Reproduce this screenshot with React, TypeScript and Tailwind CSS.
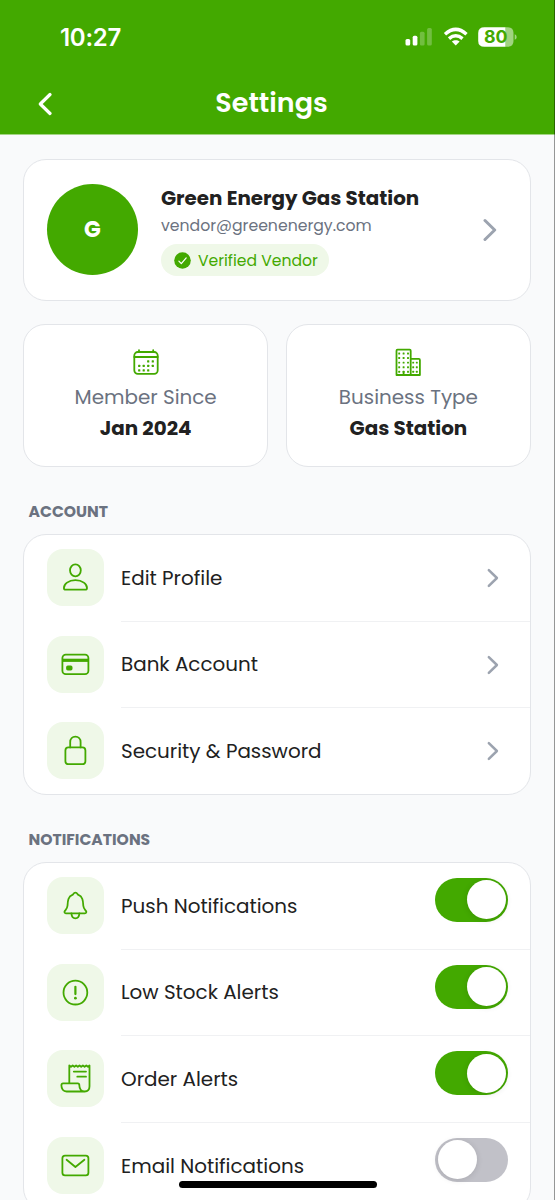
import { useState } from 'react';
import type { ReactNode } from 'react';

const PersonIcon = () => (
  <>
    <ellipse cx="28.4" cy="21.3" rx="5.4" ry="6" />
    <path d="M16.9 38.9c0-3.6 4.4-7.8 11.5-7.8s11.6 4.2 11.6 7.8c0 1.2-.7 1.8-1.9 1.8h-19.3c-1.2 0-1.9-.6-1.9-1.800z" />
  </>
);

const CardIcon = () => (
  <>
    <rect x="15.4" y="18.6" width="26" height="19.6" rx="3.4" />
    <path d="M15.4 24.3h26" strokeWidth="3.2" strokeLinecap="butt" />
    <rect x="20" y="30.5" width="4.6" height="3" rx="0.8" fill="currentColor" />
  </>
);

const LockIcon = () => (
  <>
    <rect x="18.4" y="25.4" width="20" height="16.8" rx="3" />
    <path d="M23.2 25.4v-5.2c0-3.4 2.2-5.5 5.2-5.5s5.200 2.100 5.200 5.500v5.200" />
  </>
);

const BellIcon = () => (
  <>
    <path d="M18.9 36.3c-1.4 0-1.9-1.3-1-2.4 1.3-1.6 2.4-2.6 2.6-5.1.3-4.7.4-9.3 4.9-10.9.8-.3 1-2.2 3-2.2s2.2 1.9 3 2.2c4.5 1.6 4.6 6.2 4.9 10.9.2 2.5 1.3 3.5 2.6 5.1.9 1.1.4 2.4-1 2.4z" />
    <path d="M24.4 36.3c.2 3.1 1.8 5.100 4 5.100s3.800-2 4-5.100" />
  </>
);

const AlertIcon = () => (
  <>
    <circle cx="28.4" cy="28.6" r="11.9" />
    <path d="M28.4 22.8v7.3" strokeWidth="2.2" />
    <circle cx="28.4" cy="34.2" r="1.4" fill="currentColor" stroke="none" />
  </>
);

const ScrollIcon = () => (
  <>
    <path d="M22.3 33.3V15.5l1.7 1.3 1.7-1.3 1.7 1.3 1.7-1.3 1.7 1.3 1.7-1.3 1.7 1.3 1.7-1.3 1.7 1.3 1.7-1.3 1.7 1.3 1.5-1.3v20.8c0 3.4-1.9 5.2-4.8 5.2H19.6c-3.4 0-5.2-2.6-5.2-6.2 0-1.4.5-2 1.7-2h14.7c1.2 0 1.5.6 1.5 1.8 0 3.4 2 6.4 5.4 6.4" />
    <path d="M26.8 21.6h12.2M30.3 26.7h8.7" />
  </>
);

const MailIcon = () => (
  <>
    <rect x="15.4" y="18.7" width="26" height="19.6" rx="2.6" />
    <path d="M19.6 22.8l8.8 7.2 9-7.2" />
  </>
);

function Chevron({ className, width }: { className: string; width: number }) {
  return (
    <svg viewBox="0 0 14 24" className={className} fill="none" stroke="currentColor" strokeWidth={width} strokeLinecap="round" strokeLinejoin="round">
      <path d="M2 2.5L11.7 12 2 21.5" />
    </svg>
  );
}

function Toggle({ on, onChange }: { on: boolean; onChange: () => void }) {
  return (
    <button
      role="switch"
      aria-checked={on}
      onClick={onChange}
      className={`mb-3 flex h-11 w-[73px] items-center rounded-full px-[2.5px] ${on ? 'justify-end bg-[#43a900]' : 'justify-start bg-[#c1c1c8]'}`}
    >
      <span className="size-[39px] rounded-full bg-white shadow-[0_1px_6px_rgba(0,0,0,0.12)]" />
    </button>
  );
}

function Row({ icon, label, last, children }: { icon: ReactNode; label: string; last?: boolean; children: ReactNode }) {
  return (
    <div className="flex h-[86.7px] pl-[23px]">
      <div className="mt-3.5 size-[57px] shrink-0 rounded-2xl bg-[#eff8e8]">
        <svg viewBox="0 0 57 57" className="size-full text-[#43a900]" fill="none" stroke="currentColor" strokeWidth="1.8" strokeLinecap="round" strokeLinejoin="round">
          {icon}
        </svg>
      </div>
      <div className={`ml-[17px] flex flex-1 items-center justify-between border-b pr-[22px] ${last ? 'border-transparent' : 'border-[#f0f1f3]'}`}>
        <span className="whitespace-nowrap pt-[1.5px] text-[19.9px] text-[#212121]">{label}</span>
        {children}
      </div>
    </div>
  );
}

function StatCard({ icon, label, value }: { icon: ReactNode; label: string; value: string }) {
  return (
    <div className="flex h-[142.5px] flex-col items-center rounded-[22px] border border-[#e3e5e9] bg-white pt-[23px]">
      <svg viewBox="0 0 28 30" className="h-[30px] w-7 text-[#43a900]" fill="none" stroke="currentColor" strokeWidth="1.8" strokeLinecap="round" strokeLinejoin="round">
        {icon}
      </svg>
      <span className="mt-[4px] text-[19.9px] leading-[30px] text-[#6b7280]">{label}</span>
      <span className="mt-px text-[19.9px] font-bold leading-[30px] text-[#212121]">{value}</span>
    </div>
  );
}

const calendarDots = [
  [16.2, 13.4], [20.8, 13.4],
  [7.2, 17.9], [11.7, 17.9], [16.2, 17.9], [20.8, 17.9],
  [7.2, 22.4], [11.7, 22.4], [16.2, 22.4],
];

const windowDots = [5.5, 10, 14.6, 19.2, 23.7].flatMap((y) => [5.2, 9.6, 14].map((x) => [x, y]));
const annexDots = [14.6, 19.2, 23.7].flatMap((y) => [19.2, 22.8].map((x) => [x, y]));

function Dots({ points, size }: { points: number[][]; size: number }) {
  return (
    <>
      {points.map(([x, y]) => (
        <rect key={`${x}-${y}`} x={x - size / 2} y={y - size / 2} width={size} height={size} rx="0.5" fill="currentColor" stroke="none" />
      ))}
    </>
  );
}

export default function App() {
  const [toggles, setToggles] = useState({ push: true, stock: true, order: true, email: false });

  const flip = (key: keyof typeof toggles) => setToggles({ ...toggles, [key]: !toggles[key] });

  return (
    <div className="relative h-[1200px] w-[555px] overflow-hidden bg-[#f9fafb] font-['Poppins','Inter',sans-serif]">
      <header className="h-[135px] border-b border-[#a3d583] bg-[#43a900] text-white">
        <div className="flex h-[74px] items-center justify-between pl-[60px] pr-[38px]">
          <span className="pt-[2px] font-['Inter',sans-serif] text-[24px] font-semibold tracking-[-0.3px]">10:27</span>
          <svg viewBox="0 0 112 22" className="h-[22px] w-28" fill="currentColor">
            <rect x="0.5" y="13" width="4.7" height="6.5" rx="1.5" />
            <rect x="7.7" y="9.8" width="4.7" height="9.7" rx="1.5" />
            <g opacity="0.25">
              <rect x="14.9" y="5.8" width="4.7" height="13.7" rx="1.5" />
              <rect x="22.1" y="2" width="4.7" height="17.5" rx="1.5" />
            </g>
            <g fill="none" stroke="currentColor" strokeWidth="3.4">
              <path d="M40 8.2c7-6.3 14.5-6.3 21.5 0" />
              <path d="M44 12.6c4.5-3.9 9-3.9 13.5 0" />
            </g>
            <path d="M50.75 19.4l-3.9-3.8c2.200-1.900 5.600-1.900 7.800 0z" />
            <path d="M79.5 1.200H100.500v19.600H79.500Q73.200 20.800 73.200 15V7Q73.200 1.200 79.500 1.200z" />
            <path d="M100.500 1.200h1.700q6.300 0 6.300 5.800v8q0 5.800-6.300 5.800h-1.700zM109.700 8.200c2.600.8 2.600 4.800 0 5.600z" opacity="0.5" />
            <text x="90.800" y="17.300" fill="#43a900" fontFamily="Inter, sans-serif" fontSize="17.800" fontWeight="700" textAnchor="middle">80</text>
          </svg>
        </div>
        <div className="grid h-[60px] grid-cols-[1fr_auto_1fr] items-center">
          <Chevron className="ml-[38px] h-6 w-3.5 rotate-180" width={3.2} />
          <h1 className="-mt-px ml-[-12px] text-[27px] font-semibold">Settings</h1>
        </div>
      </header>

      <main className="pl-[23px] pr-6 pt-6">
        <section className="flex h-[142px] items-center rounded-[23px] border border-[#e3e5e9] bg-white pl-[23px] pr-[34px]">
          <div className="-mt-px flex size-[91px] items-center justify-center rounded-full bg-[#43a900] text-[22px] font-bold text-white">
            <span className="-mt-px">G</span>
          </div>
          <div className="ml-[23px] flex flex-1 flex-col items-start">
            <h2 className="whitespace-nowrap text-[19.85px] font-bold leading-[28px] text-[#212121]">Green Energy Gas Station</h2>
            <p className="text-[15.7px] leading-[27px] text-[#6b7280]">vendor@greenenergy.com</p>
            <div className="mt-[5px] flex h-8 w-[168px] items-center rounded-full bg-[#eff8e8] pl-[13px] text-[#43a900]">
              <svg viewBox="0 0 17 17" className="size-[17px]">
                <circle cx="8.5" cy="8.5" r="8.3" fill="currentColor" />
                <path d="M4.9 9.1l2.4 2.5 4.9-5.7" fill="none" stroke="#fff" strokeWidth="1.2" strokeLinecap="round" strokeLinejoin="round" />
              </svg>
              <span className="ml-[7px] whitespace-nowrap pt-px text-[15.6px]">Verified Vendor</span>
            </div>
          </div>
          <Chevron className="-mr-px h-6 w-3.5 text-[#9ca3af]" width={3} />
        </section>

        <section className="mt-[23px] grid grid-cols-2 gap-[17.5px]">
          <StatCard
            label="Member Since"
            value="Jan 2024"
            icon={
              <>
                <rect x="2.3" y="4" width="23.4" height="21.8" rx="3.5" />
                <path d="M2.3 9h23.4M7 2.2v1.8M21.2 2.2v1.8" />
                <Dots points={calendarDots} size={2.2} />
              </>
            }
          />
          <StatCard
            label="Business Type"
            value="Gas Station"
            icon={
              <>
                <path d="M2.5 27V2.7q0-1 1-1h12.2q1 0 1 1v24.3zM16.7 10.9h8.2q1 0 1 1v15.1h-9.2M9.6 24v3" />
                <Dots points={windowDots} size={1.9} />
                <Dots points={annexDots} size={1.9} />
              </>
            }
          />
        </section>

        <h3 className="ml-[5.5px] mt-[33px] text-[15.6px] font-bold leading-6 text-[#6b7280]">ACCOUNT</h3>
        <section className="mt-[10.5px] h-[261px] rounded-[23px] border border-[#e3e5e9] bg-white">
          <Row icon={<PersonIcon />} label="Edit Profile">
            <Chevron className="mr-[9px] h-5 w-3 text-[#9ca3af]" width={3} />
          </Row>
          <Row icon={<CardIcon />} label="Bank Account">
            <Chevron className="mr-[9px] h-5 w-3 text-[#9ca3af]" width={3} />
          </Row>
          <Row icon={<LockIcon />} label="Security & Password" last>
            <Chevron className="mr-[9px] h-5 w-3 text-[#9ca3af]" width={3} />
          </Row>
        </section>

        <h3 className="ml-[5.5px] mt-[33px] text-[15.6px] font-bold leading-6 text-[#6b7280]">NOTIFICATIONS</h3>
        <section className="mt-[10px] h-[349px] rounded-[23px] border border-[#e3e5e9] bg-white">
          <Row icon={<BellIcon />} label="Push Notifications">
            <Toggle on={toggles.push} onChange={() => flip('push')} />
          </Row>
          <Row icon={<AlertIcon />} label="Low Stock Alerts">
            <Toggle on={toggles.stock} onChange={() => flip('stock')} />
          </Row>
          <Row icon={<ScrollIcon />} label="Order Alerts">
            <Toggle on={toggles.order} onChange={() => flip('order')} />
          </Row>
          <Row icon={<MailIcon />} label="Email Notifications" last>
            <Toggle on={toggles.email} onChange={() => flip('email')} />
          </Row>
        </section>
      </main>

      {/* home indicator */}
      <div className="absolute bottom-[12px] left-[179px] h-[7px] w-[197.5px] rounded-full bg-black" />
      <div className="absolute right-0 top-0 h-full w-px bg-black/40" />
    </div>
  );
}
